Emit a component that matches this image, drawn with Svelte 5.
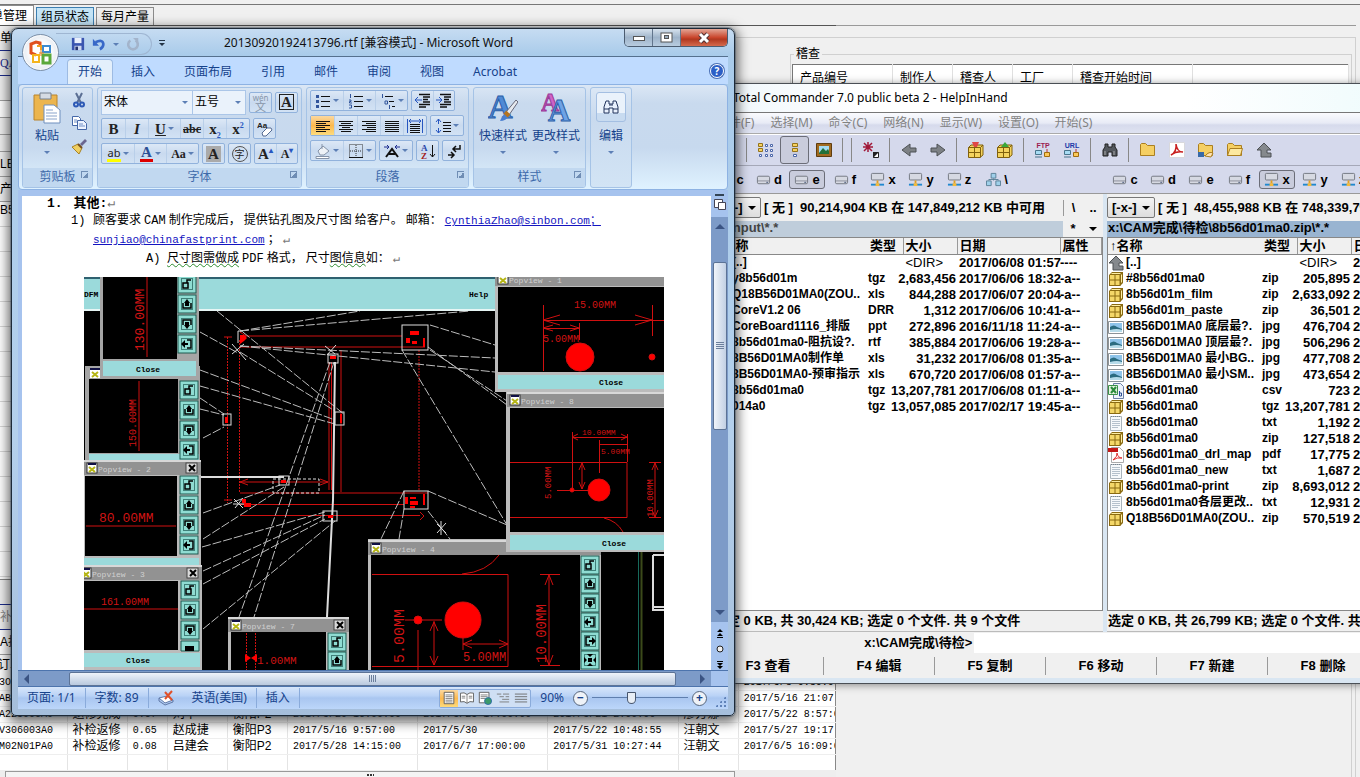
<script>
	// background order application
	const sheetTabs = ['单管理', '组员状态', '每月产量'];
	const auditColumns = ['产品编号', '制作人', '稽查人', '工厂', '稽查开始时间', ''];
	const orderWidths = [69, 60, 40, 60, 60, 130, 130, 130, 60, 97];
	const orders = [
		['3O0', '补检返修', '0.11', '赵成捷', '衡阳P2', '2017/5/3 8:30:00', '2017/5/5', '2017/5/3 9:10:00', '汪朝文', '2017/5/3 0:30:00'],
		['AB1', '补检返修', '0.32', '刘丰', '衡阳P2', '2017/5/16 8:57:00', '2017/5/18', '2017/5/16 9:48:00', '汪朝文', '2017/5/16 21:07:00'],
		['A225006A0', '返修完成', '0.67', '刘丰', '衡阳P2', '2017/5/20 16:00:00', '2017/5/25 17:00:00', '2017/5/21 2:00:00', '廖方娜', '2017/5/22 8:57:00'],
		['V306003A0', '补检返修', '0.65', '赵成捷', '衡阳P3', '2017/5/16 9:57:00', '2017/5/30', '2017/5/22 10:48:55', '汪朝文', '2017/5/27 19:17:00'],
		['M02N01PA0', '补检返修', '0.08', '吕建会', '衡阳P2', '2017/5/28 14:15:00', '2017/6/7 17:00:00', '2017/5/31 10:27:44', '汪朝文', '2017/6/5 16:09:00']
	];

	// Total Commander
	const menus = ['文件(F)', '选择(M)', '命令(C)', '网络(N)', '显示(W)', '设置(O)', '开始(S)'];
	const tools = ['refresh', '|', 'brief', 'full*', 'image', '|', '|', 'invert', '|', 'back', 'forward', '|', 'pack', 'unpack', '|', 'ftp', 'url', '|', 'find', '|', 'folder', 'pdf', 'share', 'open', 'up'];
	const fkeys = ['F3 查看', 'F4 编辑', 'F5 复制', 'F6 移动', 'F7 新建', 'F8 删除', 'Alt+F4 退出'];
	const panels = [
		{
			drive: 'e',
			free: '[ 无 ]  90,214,904 KB 在 147,849,212 KB 中可用',
			path: 'e:\\input\\*.*',
			status: '选定 0 KB, 共 30,424 KB; 选定 0 个文件. 共 9 个文件',
			files: [
				['up', '[..]', '', '<DIR>', '2017/06/08 01:57', '----'],
				['zip', 'y8b56d01m', 'tgz', '2,683,456', '2017/06/06 18:32', '-a--'],
				['csv', 'Q18B56D01MA0(ZOU..', 'xls', '844,288', '2017/06/07 20:04', '-a--'],
				['txt', 'CoreV1.2 06', 'DRR', '1,312', '2017/06/06 10:41', '-a--'],
				['txt', 'CoreBoard1116_排版', 'ppt', '272,896', '2016/11/18 11:24', '-a--'],
				['txt', '8b56d01ma0-阻抗设?.', 'rtf', '385,884', '2017/06/06 19:28', '-a--'],
				['csv', '8B56D01MA0制作单', 'xls', '31,232', '2017/06/08 01:35', '-a--'],
				['csv', '8B56D01MA0-预审指示', 'xls', '670,720', '2017/06/08 01:57', '-a--'],
				['zip', '8b56d01ma0', 'tgz', '13,207,781', '2017/06/08 01:11', '-a--'],
				['zip', '014a0', 'tgz', '13,057,085', '2017/02/17 19:45', '-a--']
			]
		},
		{
			drive: 'x',
			free: '[ 无 ]  48,455,988 KB 在 748,339,792 KB 中可用',
			path: 'x:\\CAM完成\\待检\\8b56d01ma0.zip\\*.*',
			status: '选定 0 KB, 共 26,799 KB; 选定 0 个文件. 共 16 个文件',
			files: [
				['up', '[..]', '', '<DIR>'],
				['zip', '#8b56d01ma0', 'zip', '205,895'],
				['zip', '8b56d01m_film', 'zip', '2,633,092'],
				['zip', '8b56d01m_paste', 'zip', '36,501'],
				['jpg', '8B56D01MA0 底层最?.', 'jpg', '476,704'],
				['jpg', '8B56D01MA0 顶层最?.', 'jpg', '506,296'],
				['jpg', '8B56D01MA0 最小BG..', 'jpg', '477,708'],
				['jpg', '8B56D01MA0 最小SM..', 'jpg', '473,654'],
				['csv', '8b56d01ma0', 'csv', '723'],
				['zip', '8b56d01ma0', 'tgz', '13,207,781'],
				['txt', '8b56d01ma0', 'txt', '1,192'],
				['zip', '8b56d01ma0', 'zip', '127,518'],
				['pdf', '8b56d01ma0_drl_map', 'pdf', '17,775'],
				['txt', '8b56d01ma0_new', 'txt', '1,687'],
				['zip', '8b56d01ma0-print', 'zip', '8,693,012'],
				['txt', '8b56d01ma0各层更改..', 'txt', '12,931'],
				['zip', 'Q18B56D01MA0(ZOU..', 'zip', '570,519']
			].map((f) => [...f, '2017/06/08 01:57', '-a--'])
		}
	];
	const drives = ['c', 'd', 'e', 'f', 'x', 'y', 'z', '\\'];

	// Word
	const ribbonTabs = ['开始', '插入', '页面布局', '引用', '邮件', '审阅', '视图', 'Acrobat'];

	// [x1, y1, x2, y2] of the nets in the drawing
	const nets = [
		[217, 311, 345, 415], [200, 332, 238, 353], [200, 370, 335, 420], [200, 386, 335, 424],
		[200, 398, 224, 414], [200, 409, 224, 415], [203, 438, 224, 427], [240, 331, 360, 311],
		[240, 331, 470, 311], [240, 346, 495, 358], [240, 346, 495, 372], [240, 352, 335, 411],
		[430, 325, 495, 345], [428, 347, 507, 405], [430, 350, 507, 401], [402, 350, 507, 525],
		[428, 491, 507, 525], [428, 511, 450, 539], [404, 491, 381, 539], [404, 509, 399, 539],
		[203, 513, 280, 485], [203, 539, 284, 487], [202, 547, 325, 512], [203, 571, 325, 515],
		[203, 584, 325, 519], [203, 629, 335, 521], [330, 362, 239, 617], [334, 362, 254, 617]
	];
	const padBoxes = [
		[402, 325, 26, 25], [328, 354, 10, 9], [223, 414, 8, 11], [335, 412, 9, 13],
		[279, 476, 10, 9], [323, 511, 14, 10], [404, 491, 24, 18]
	];
</script>

{#snippet caret()}<i class="caret"></i>{/snippet}

{#snippet icon(name)}
	<svg class="ico" width="16" height="16" viewBox="0 0 16 16" fill="none" aria-hidden="true">
		{#if name === 'zip'}
			<path d="M1 4 4 1h11v11l-3 3H1z" fill="#8a6a10" /><path d="M2 4h10v10H2z" fill="#f4d768" /><path d="M4 2h9l-1 1H3zM13 4l1-1v8l-1 1z" fill="#fdeea5" /><path d="M7 3v12M1 9h12M12 4v11" stroke="#8a6a10" />
		{:else if name === 'jpg'}
			<path d="M.5 2.500h15v12H.5z" fill="#fff" stroke="#8c9499" /><path d="M2 4h12v9H2z" fill="#8ec4ea" /><path d="M2 8q4-3 7 0l5 2v3H2z" fill="#2b6c80" /><path d="M2 11q7-2 12 0v2H2z" fill="#b7dcea" />
		{:else if name === 'txt'}
			<path d="M2.500 1.500h11v14h-11z" fill="#f6f9fb" stroke="#aab4bc" /><path d="M4 4.500h8M4 6.500h8M4 8.500h8M4 10.500h8M4 12.500h6" stroke="#b5c1cc" /><path d="M3 1.500h10" stroke="#77838d" stroke-dasharray="1 1" />
		{:else if name === 'csv'}
			<path d="M5.500.5h7l3 3v12h-10z" fill="#eef3fb" stroke="#6b7fa5" /><path d="M.5 2.500h9v9h-9z" fill="#e4f2de" stroke="#3a9148" /><path d="m3 4 5 6M8 4 3 10" stroke="#2b8a3b" stroke-width="2" /><path d="M11.500 8v5m0-3h2v3h-2" stroke="#2c4f94" />
		{:else if name === 'pdf'}
			<path d="M3.500.5h8l4 4v11h-12z" fill="#fff" stroke="#aaa" /><path d="M0 1h10v4H0z" fill="#c31818" /><path d="M5 13q5-4 4-7 1 5 5 5-5-1-9 2z" stroke="#e03030" />
		{:else if name === 'acrobat'}
			<path d="M.5.5h15v15H.5z" fill="#fff" stroke="#d8d8dc" /><path d="M2 13q6-3 5-11 1 8 7 8-7-1-12 3z" stroke="#c81e1e" stroke-width="1.500" />
		{:else if name === 'up'}
			<path d="M8 1 15 8h-4v3h4v4H5V8H1z" fill="#85898d" stroke="#4d5154" />
		{:else if name === 'drive'}
			<rect x="1.500" y="4.500" width="13" height="8" rx="1.500" fill="#d6d9e2" stroke="#71757f" /><path d="M2 9.500h12" stroke="#8b8f9b" /><path d="M11 11h2" stroke="#457" />
		{:else if name === 'net'}
			<rect x="1.500" y="1.500" width="13" height="7" rx="1" fill="#d6d9e2" stroke="#71757f" /><path d="M8 9v3" stroke="#e4a020" stroke-width="2" /><path d="M1 13.500h14" stroke="#2088cf" stroke-width="2" /><path d="M6 12h4v3H6z" fill="#f4b93a" />
		{:else if name === 'hood'}
			<path d="M5.500 1.500h5v5h-5zM.5 9.500h5v5h-5zM10.500 9.500h5v5h-5z" fill="#9fd0ea" stroke="#5a8096" /><path d="M8 7v2M3 9V8h10v1" stroke="#5a8096" />
		{:else if name === 'brief'}
			<path d="M.5 1.500h4v3h-4zM.5 6.500h4v3h-4z" fill="#f7d15f" stroke="#94731a" />
			<path d="M1.500 12.500h2v2h-2zM7.500 2.500h2v2h-2zM12.500 2.500h2v2h-2zM7.500 7.500h2v2h-2zM12.500 7.500h2v2h-2zM7.500 12.500h2v2h-2zM12.500 12.500h2v2h-2z" fill="#fff" stroke="#4b66a8" />
		{:else if name === 'full'}
			<path d="M5.500 1.500h5v3h-5zM5.500 6.500h5v3h-5z" fill="#f7d15f" stroke="#94731a" /><path d="M6.500 12.500h3v2h-3z" fill="#fff" stroke="#4b66a8" />
		{:else if name === 'image'}
			<path d="M.5 1.500h15v13H.5z" fill="#a06a20" stroke="#5e3d10" /><path d="M3 4h10v8H3z" fill="#a4dcf2" /><path d="m3 11 4-5 3 3 2-2 1 2v3H3z" fill="#23713a" />
		{:else if name === 'invert'}
			<path d="M5 0v10M0 5h10M1 1l8 8M9 1 1 9" stroke="#a01838" stroke-width="1.500" /><path d="M10.500 10.500h5v5h-5z" fill="#fff" stroke="#222" /><path d="m10 10v6l6-6z" fill="#222" />
		{:else if name === 'back'}
			<path d="M9 2v4h6v4H9v4L1 8z" fill="#7d8185" stroke="#4d5154" />
		{:else if name === 'forward'}
			<path d="M7 2v4H1v4h6v4l8-6z" fill="#7d8185" stroke="#4d5154" />
		{:else if name === 'pack' || name === 'unpack'}
			<path d="M.5 5.500 3 3h12v10l-3 2.500H.5z" fill="#f4d35e" stroke="#80600c" /><path d="M.5 10.500h12M6.500 5v10M.5 5.500h12v10M12.500 5.500 15 3" stroke="#80600c" />
			{#if name === 'pack'}<path d="M4 0h7L9 5H6z" fill="#e04646" />{:else}<path d="m8 0 4 5H4z" fill="#3aa83a" />{/if}
		{:else if name === 'ftp' || name === 'url'}
			<text x="8" y="6" text-anchor="middle" font-size="7" font-weight="bold" font-family="Liberation Sans" fill={name === 'ftp' ? '#9c2050' : '#2038a8'}>{name.toUpperCase()}</text><path d="M.5 8.500h6v4h-6zM0 15h7" fill="#a8dcf4" stroke="#49758c" /><path d="M9.500 10.500h5v4h-5z" fill="#fbc95a" stroke="#a06c10" /><path d="M12 7v3" stroke="#b33" />
		{:else if name === 'find'}
			<path d="M3 2h3v3h4V2h3v3l2 3v6h-5v-4H6v4H1V8l2-3z" fill="#53575d" stroke="#222" /><path d="M3 9v4M12 9v4" stroke="#aaa" />
		{:else if name === 'folder' || name === 'share' || name === 'open'}
			<path d="M.5 13.500v-11l1-1h4l2 2h7v10z" fill="#f5cf63" stroke="#ab7f20" />
			{#if name === 'open'}<path d="m3 6.500h12.500l-2 7H.5z" fill="#fde9a0" stroke="#ab7f20" />{/if}
			{#if name === 'share'}<path d="M0 10h6v5H0z" fill="#386aa8" /><path d="M7 14q4-5 8-3l-2 4z" fill="#ffe3b4" stroke="#ab7f20" />{/if}
		{:else if name === 'refresh'}
			<path d="M13 8a5 5 0 1 1-2-4l2 2" stroke="#2a8a3a" stroke-width="2" />
		{:else if name === 'save'}
			<path d="M1 1h14v14H1z" fill="#3a55b0" /><path d="M4 1h8v6H4z" fill="#e9effc" /><path d="M4 10h8v5H4z" fill="#cdd6ee" /><path d="M5 11h3v4H5z" fill="#26336e" />
		{:else if name === 'undo'}
			<path d="M4 6q8-4 9 2 0 4-4 6" stroke="#3868c8" stroke-width="3" /><path d="M1 2v8h7z" fill="#3868c8" />
		{:else if name === 'redo'}
			<path d="M5 4a5.500 5.500 0 1 0 6 0" stroke="#a3b4cb" stroke-width="3" /><path d="M8 1h6v6z" fill="#a3b4cb" />
		{:else if name === 'cut'}
			<path d="M5 1 10 11M11 1 6 11" stroke="#5b6f94" stroke-width="2" /><circle cx="5" cy="12.500" r="2" stroke="#2d59b5" stroke-width="2" /><circle cx="11" cy="12.500" r="2" stroke="#2d59b5" stroke-width="2" />
		{:else if name === 'copy'}
			<path d="M1.500 1.500h6l2 2v7h-8z" fill="#fff" stroke="#4568a8" /><path d="M6.500 5.500h6l3 3v6h-9z" fill="#eef4ff" stroke="#4568a8" /><path d="M8 9h4M8 11h6M3 5h3M3 7h3" stroke="#6f8ec6" />
		{:else if name === 'brush'}
			<path d="m9 6 5-5 2 2-5 5z" fill="#6a6690" /><path d="m1 9 6-3 4 4-3 6z" fill="#f0cf60" stroke="#a88224" /><path d="m7 6 4 4" stroke="#754c1c" stroke-width="2" />
		{:else if name === 'eraser'}
			<text x="0" y="7" font-size="8" font-weight="bold" font-family="Liberation Sans" fill="#222">Aa</text><path d="m5 12 5-5h4l1 2-6 6H6z" fill="#fff" stroke="#546b92" />
		{:else if name === 'bullets' || name === 'numbers'}
			<path d="M6 3.500h9M6 8.500h9M6 13.500h9" stroke="#111" />
			{#if name === 'bullets'}<path d="M1 2h3v3H1zM1 7h3v3H1zM1 12h3v3H1z" fill="#31549b" />{:else}<path d="M2.500 1v4M1 7h2v1.500H1.500V10H4M1 12h2.500v3H1" stroke="#31549b" />{/if}
		{:else if name === 'multi'}
			<path d="M5 3.500h8M9 8.500h5M12 13.500h3" stroke="#111" /><path d="M2.500 1v4M5 8h2.500v3H5zM9.500 12v4" stroke="#31549b" />
		{:else if name === 'outdent' || name === 'indent'}
			<path d="M4 1.500h11M8 4h7M8 6.500h5M8 9h7M4 11.500h11M4 14h7" stroke="#111" stroke-width="1.500" />
			{#if name === 'outdent'}<path d="M0 7h7M3 4 0 7l3 3" stroke="#2756c0" />{:else}<path d="M0 7h6M3 4l3 3-3 3" stroke="#2756c0" />{/if}
		{:else if name === 'left'}
			<path d="M1 3.500h14M1 5.500h10M1 7.500h14M1 9.500h9M1 11.500h14M1 13.500h10" stroke="#111" />
		{:else if name === 'center'}
			<path d="M1 3.500h14M3 5.500h10M1 7.500h14M4 9.500h8M1 11.500h14M3 13.500h10" stroke="#111" />
		{:else if name === 'right'}
			<path d="M1 3.500h14M5 5.500h10M1 7.500h14M6 9.500h9M1 11.500h14M5 13.500h10" stroke="#111" />
		{:else if name === 'justify'}
			<path d="M1 3.500h14M1 5.500h14M1 7.500h14M1 9.500h14M1 11.500h14M1 13.500h14" stroke="#111" />
		{:else if name === 'spread'}
			<path d="M.5 1v14M15.500 1v14M2 3h12M4 1 2 3l2 2M12 1l2 2-2 2" stroke="#2756c0" /><path d="M3 6.500h10M3 8.500h10M3 10.500h10M3 12.500h10M3 14.500h10" stroke="#111" />
		{:else if name === 'spacing'}
			<path d="M3.500 1v5M3.500 10v5M1 4l2.500-3L6 4M1 12l2.500 3L6 12" stroke="#2756c0" /><path d="M8 4.500h8M8 7.500h8M8 10.500h8M8 13.500h8" stroke="#111" />
		{:else if name === 'fill'}
			<path d="m3 8 5-5 6 5-5 4H5z" fill="#eef2f7" stroke="#8593a8" /><path d="M7 6V1" stroke="#8593a8" /><path d="M1 13.500h13v2H1z" fill="#fff" stroke="#8593a8" />
		{:else if name === 'grid'}
			<path d="M1.500 1.500h13v13h-13zM8 2v12M2 8h12" stroke="#333" stroke-dasharray="1 1" /><path d="M1 14.500h14" stroke="#111" />
		{:else if name === 'cjk'}
			<path d="m2 14 6-8 6 8M5 11h6" stroke="#111" stroke-width="2" /><path d="M0 4h5M3 2l2 2-2 2M16 4h-5M13 2l-2 2 2 2" stroke="#1c2c90" />
		{:else if name === 'sort'}
			<text x="1" y="8" font-size="9" font-weight="bold" font-family="Liberation Serif" fill="#2846a8">A</text><text x="1" y="16" font-size="9" font-weight="bold" font-family="Liberation Serif" fill="#a32121">Z</text><path d="M12.500 2v12M10 11l2.500 3 2.500-3" stroke="#111" />
		{:else if name === 'marks'}
			<path d="M14 2v4H8M10 3 7 6l3 3M2 12h6M5 9l3 3-3 3" stroke="#111" stroke-width="1.500" />
		{:else if name === 'binocular'}
			<path d="M3 2h3v3h4V2h3l2 6v6h-5V9H6v5H1V8z" fill="#e9f1fd" stroke="#22345c" /><path d="M1 10h5M10 10h5M6 6h4" stroke="#22345c" />
		{:else if name === 'spell'}
			<path d="m1 8 6 5 8-3-6-4z" fill="#fff" stroke="#6079a8" /><path d="m1 8v3l6 4 8-3v-2" stroke="#6079a8" /><path d="m7 2 7 8M14 1 7 9" stroke="#e0502a" stroke-width="2" />
		{:else if name === 'print'}
			<path d="M2.500 1.500h11v13h-11z" fill="#fff" stroke="#555" /><path d="M4 4.500h8M4 6.500h8M4 8.500h8M4 10.500h8M4 12.500h8" stroke="#777" />
		{:else if name === 'reading'}
			<path d="M.5 2.500Q5 1 8 4q3-3 7.500-1.500v10Q11 11 8 14q-3-3-7.500-1.500z" fill="#fff" stroke="#555" /><path d="M8 4v10M2 6h4M2 8h4M10 6h4M10 8h4" stroke="#777" />
		{:else if name === 'web'}
			<path d="M1.500 1.500h11v12h-11z" fill="#fff" stroke="#555" /><path d="M3 4.500h8M3 6.500h8M3 8.500h5" stroke="#777" /><circle cx="11.500" cy="11.500" r="4" fill="#3d9a6b" stroke="#2869a8" />
		{:else if name === 'outline'}
			<path d="M1 3.500h5M8 3.500h7M4 6.500h5M11 6.500h4M7 9.500h8M4 12.500h11" stroke="#777" />
		{:else if name === 'draft'}
			<path d="M1 3.500h14M1 6.500h14M1 9.500h14M1 12.500h14" stroke="#666" />
		{/if}
	</svg>
{/snippet}

<div class="desktop">
	<main class="orders">
		<section class="sheet">
			<nav class="sheet-tabs">
				{#each sheetTabs as tab, i}
					<button class:current={i === 0} class:hot={i === 1}>{tab}</button>
				{/each}
			</nav>
			<div class="form">
				<div class="line tall blue">单</div>
				<div class="line tall blue link">QA</div>
				<div class="line tall"></div>
				<div class="line white"></div>
				<div class="line"></div>
				<div class="line"></div>
				<div class="line tall">LE</div>
				<div class="line tall">产品</div>
				<div class="rows">B5</div>
				<div class="line tall blue"></div>
				<div class="line tall blue dim">补</div>
				<div class="line tall white">A抽</div>
			</div>
			<table class="order-table">
				<colgroup>{#each orderWidths as w}<col style="width: {w}px" />{/each}</colgroup>
				<thead><tr><th colspan="10">订单</th></tr></thead>
				<tbody>
					{#each orders as row}
						<tr>{#each row as cell, i}<td class:num={![1, 3, 4, 8].includes(i)}>{cell}</td>{/each}</tr>
					{/each}
					<tr>{#each orderWidths as w}<td></td>{/each}</tr>
				</tbody>
			</table>
			<div class="order-scroll"><div><i></i></div></div>
		</section>
		<section class="audit">
			<div class="rule"></div>
			<div class="audit-page">
				<fieldset>
					<legend>稽查</legend>
					<table>
						<thead><tr>{#each auditColumns as c}<th>{c}</th>{/each}</tr></thead>
					</table>
				</fieldset>
			</div>
		</section>
	</main>

	<section class="tc">
		<header class="tc-title">{@render icon('save')}<span>Total Commander 7.0 public beta 2 - HelpInHand</span></header>
		<nav class="tc-menu">{#each menus as m}<button>{m}</button>{/each}</nav>
		<div class="tc-tools">
			{#each tools as t}
				{#if t === '|'}
					<i class="sep"></i>
				{:else}
					<button class:down={t.endsWith('*')} aria-label={t.replace('*', '')}>{@render icon(t === 'pdf' ? 'acrobat' : t.replace('*', ''))}</button>
				{/if}
			{/each}
		</div>
		<div class="tc-halves tc-drives">
			{#each panels as p}
				<div>
					{#each drives as d, i}
						<button class:down={d === p.drive}>{@render icon(i < 4 ? 'drive' : i < 7 ? 'net' : 'hood')}{d}</button>
					{/each}
				</div>
			{/each}
		</div>
		<div class="tc-halves">
			{#each panels as p, n}
				<section class="panel">
					<div class="info">
						<span class="drive-pick"><select aria-label="drive"><option>[-{p.drive}-]</option></select>{@render caret()}</span>
						<span class="free">{p.free}</span>
						<button class="root">\</button><button>..</button>
					</div>
					<div class="path">
						<span class:active={n === 1}>{p.path}</span>
						<button>*</button><button aria-label="history">{@render caret()}</button>
					</div>
					<div class="list">
						<table>
							<thead><tr><th class="name">↑名称</th><th class="ext">类型</th><th class="size">大小</th><th class="date">日期</th><th>属性</th></tr></thead>
							<tbody>
								{#each p.files as [kind, name, ext, size, date, attr]}
									<tr>
										<td class="narrow"><span class="file">{@render icon(kind)}{name}</span></td>
										<td class="narrow">{ext}</td>
										<td><span class="amount" class:dir={!ext}>{size}</span></td>
										<td class="date">{date}</td>
										<td class="attr">{attr}</td>
									</tr>
								{/each}
							</tbody>
						</table>
					</div>
					<div class="panel-status">{p.status}</div>
				</section>
			{/each}
		</div>
		<div class="cmd"><label for="cmd">x:\CAM完成\待检&gt;</label><input id="cmd" /></div>
		<div class="fkeys">{#each fkeys as k}<button>{k}</button>{/each}</div>
	</section>

	<section class="word">
		<header class="title">
			<div class="quick">
				<button aria-label="保存">{@render icon('save')}</button>
				<button aria-label="撤消">{@render icon('undo')}</button>
				{@render caret()}
				<button aria-label="重复">{@render icon('redo')}</button>
			</div>
			<span class="more">{@render caret()}</span>
			<h1>20130920192413796.rtf [兼容模式] - Microsoft Word</h1>
			<div class="caption">
				<button aria-label="最小化"><svg width="14" height="8"><rect x="1.500" y="2.500" width="11" height="4" fill="#fff" stroke="#555" /></svg></button>
				<button aria-label="还原"><svg width="13" height="11"><rect x="1" y="1" width="11" height="9" fill="#fff" stroke="#555" /><rect x="4.500" y="3.500" width="4" height="3" fill="#9ab" stroke="#555" /></svg></button>
				<button class="close" aria-label="关闭"><svg width="14" height="12"><path d="M3 2l8 8M11 2l-8 8" stroke="#533" stroke-width="5" /><path d="M3 2l8 8M11 2l-8 8" stroke="#fff" stroke-width="3" /></svg></button>
			</div>
		</header>
		<button class="office" aria-label="Office">
			<svg width="26" height="26" viewBox="0 0 26 26" fill="none" stroke-width="3">
				<path d="M12 6V3L8 2 3 4v9l5 2" stroke="#e0501e" /><path d="M9 6h4v4" stroke="#f3a022" stroke-width="2" />
				<path d="M15 6h7v6h-7z" stroke="#3c8bd0" stroke-width="2" />
				<path d="M5 15h6v7H5z" stroke="#f4b41c" stroke-width="2" /><path d="M15 15h7v8h-7z" stroke="#5aa83a" /><path d="M11 13h5M13 10v6" stroke="#e58020" stroke-width="1" />
			</svg>
		</button>
		<nav class="tabs">
			{#each ribbonTabs as tab, i}<button class:current={i === 0}>{tab}</button>{/each}
			<button class="help" aria-label="帮助">?</button>
		</nav>
		<div class="ribbon">
			<section class="group">
				<div class="body clip">
					<button class="big">
						<svg width="28" height="32" viewBox="0 0 28 32"><path d="M1 3h23v25H1z" fill="#ecb54e" stroke="#b9842c" /><path d="M7 1h11v6H7z" fill="#d5dbe3" stroke="#75808f" /><path d="M11 13h10l6 5v13H11z" fill="#fff" stroke="#6f8fbe" /><path d="M13 18h7M13 21h11M13 24h11M13 27h11" stroke="#8aa4cb" /></svg>
						粘贴{@render caret()}
					</button>
					<div class="stack">
						<button aria-label="剪切">{@render icon('cut')}</button>
						<button aria-label="复制">{@render icon('copy')}</button>
						<button aria-label="格式刷">{@render icon('brush')}</button>
					</div>
				</div>
				<footer>剪贴板<i class="launch"></i></footer>
			</section>
			<section class="group">
				<div class="body">
					<div class="row first">
						<span class="combo wide"><select aria-label="字体"><option>宋体</option></select>{@render caret()}</span>
						<span class="combo"><select aria-label="字号"><option>五号</option></select>{@render caret()}</span>
						<span class="set"><button class="wen"><small>wén</small>文</button></span>
						<span class="set"><button class="serif"><b class="boxed">A</b></button></span>
					</div>
					<div class="row">
						<span class="set roomy">
							<button class="serif"><b>B</b></button><button class="serif"><b><em>I</em></b></button>
							<button class="serif drop"><b><u>U</u></b>{@render caret()}</button>
							<button class="serif"><s>abc</s></button><button class="serif"><b>x<sub>2</sub></b></button><button class="serif"><b>x<sup>2</sup></b></button>
						</span>
						<span class="set"><button aria-label="清除格式">{@render icon('eraser')}</button></span>
					</div>
					<div class="row">
						<span class="set">
							<button class="drop"><span class="mark hl">ab</span>{@render caret()}</button>
							<button class="drop serif"><b class="mark red">A</b>{@render caret()}</button>
							<button class="drop serif"><b class="less">Aa</b>{@render caret()}</button>
						</span>
						<span class="set"><button class="serif"><b class="shade">A</b></button></span>
						<span class="set"><button><span class="ring">字</span></button></span>
						<span class="set"><button class="serif"><b>A<sup>▴</sup></b></button><button class="serif"><b class="less">A<sup>▾</sup></b></button></span>
					</div>
				</div>
				<footer>字体<i class="launch"></i></footer>
			</section>
			<section class="group">
				<div class="body">
					<div class="row">
						<span class="set">
							{#each ['bullets', 'numbers', 'multi'] as n}<button class="drop" aria-label={n}>{@render icon(n)}{@render caret()}</button>{/each}
						</span>
						<span class="set">{#each ['outdent', 'indent'] as n}<button aria-label={n}>{@render icon(n)}</button>{/each}</span>
					</div>
					<div class="row">
						<span class="set roomy">
							{#each ['left', 'center', 'right', 'justify', 'spread'] as n}<button class:on={n === 'left'} aria-label={n}>{@render icon(n)}</button>{/each}
						</span>
						<span class="set"><button class="drop" aria-label="行距">{@render icon('spacing')}{@render caret()}</button></span>
					</div>
					<div class="row">
						<span class="set">{#each ['fill', 'grid'] as n}<button class="drop" aria-label={n}>{@render icon(n)}{@render caret()}</button>{/each}</span>
						<span class="set"><button class="drop" aria-label="中文版式">{@render icon('cjk')}{@render caret()}</button></span>
						<span class="set"><button aria-label="排序">{@render icon('sort')}</button></span>
						<span class="set"><button aria-label="编辑标记">{@render icon('marks')}</button></span>
					</div>
				</div>
				<footer>段落<i class="launch"></i></footer>
			</section>
			<section class="group">
				<div class="body styles">
					<button class="big">
						<svg width="30" height="32" viewBox="0 0 30 32"><text x="0" y="26" font-family="Liberation Serif" font-size="34" font-weight="bold" fill="#4f8ad6" stroke="#2b5ea8">A</text><path d="m18 20 10-12 2 2-9 13z" fill="#e6e9ee" stroke="#667" /><path d="M12 29q3-7 6-8l3 3q-3 5-9 5z" fill="#4a7fd0" /><path d="m17 20 4 4" stroke="#b57420" stroke-width="4" /></svg>
						快速样式{@render caret()}
					</button>
					<button class="big">
						<svg width="30" height="32" viewBox="0 0 30 32"><text x="0" y="19" font-family="Liberation Serif" font-size="25" font-weight="bold" fill="#cf63c8" stroke="#9c3a97">A</text><text x="7" y="29" font-family="Liberation Serif" font-size="31" font-weight="bold" fill="#6ea3e6" stroke="#2b5ea8">A</text></svg>
						更改样式{@render caret()}
					</button>
				</div>
				<footer>样式<i class="launch"></i></footer>
			</section>
			<section class="group edit">
				<div class="body">
					<button class="big"><span class="tile">{@render icon('binocular')}</span>编辑{@render caret()}</button>
				</div>
			</section>
		</div>

		<div class="work">
			<article class="page">
				<p class="h"><b>1.</b><b>其他:</b><i>↵</i></p>
				<p class="l1"><span>1)</span><span>顾客要求</span><tt>CAM</tt><span>制作完成后，</span><span>提供钻孔图及尺寸图</span><span>给客户。</span><span>邮箱：</span><a href="mailto:CynthiaZhao@sinbon.com">CynthiaZhao@sinbon.com；</a></p>
				<p class="l2"><a href="mailto:sunjiao@chinafastprint.com">sunjiao@chinafastprint.com</a>；<i>↵</i></p>
				<p class="l3"><span>A)</span><span class="wavy">尺寸图需做成</span><tt>PDF</tt><span>格式，</span><span>尺寸<span class="wavy">图信息</span>如：</span><i>↵</i></p>
				<svg class="cad" width="580" height="393" viewBox="84 277 580 393">
					{#snippet tool(x, y, k)}
						<g transform="translate({x} {y})">
							<rect width="18" height="18" fill="#8fdcd2" stroke="#1c5a50" /><path d="M3 3.500h12M3 14.500h12M3.500 4v10M14.500 4v10" stroke="#3f7f78" />
							{#if k % 6 === 0}<path d="M5 8h5v5H5zM9 8V5h4" fill="none" stroke="#000" stroke-width="1.500" />
							{:else if k % 6 === 1}<path d="M5 8v5h8V8" fill="none" stroke="#000" stroke-width="1.500" /><path d="m9 4 3 4h-1v3H7V8H6z" />
							{:else if k % 6 === 2}<path d="M5 10V5h8v5" fill="none" stroke="#000" stroke-width="1.500" /><path d="m9 14 3-4h-1V7H7v3H6z" />
							{:else if k % 6 === 3}<path d="M9 5h4v8H9" fill="none" stroke="#000" stroke-width="1.500" /><path d="m3 9 4-4v3h3v2H7v3z" />
							{:else if k % 6 === 4}<path d="M9 5H5v8h4" fill="none" stroke="#000" stroke-width="1.500" /><path d="m15 9-4-4v3H8v2h3v3z" />
							{:else}<path d="M7 7h4v4H7zM3 6l3 3-3 3zM15 6l-3 3 3 3zM6 3h6L9 6zM6 15h6l-3-3z" />{/if}
						</g>
					{/snippet}
					{#snippet bar(x, y, w, label, closer)}
						<rect {x} {y} width={w} height="15" fill="#929292" />
						<path d="M{x} {y + 1}h{w}" stroke="#d8d8d8" stroke-width="2" />
						<rect x={x + 3} y={y + 3} width="10" height="10" fill="#fff" stroke="#333" /><path d="M{x + 4} {y + 4}h8" stroke="#114" stroke-width="2" /><path d="m{x + 5} {y + 7} 6 5m0-5-6 5" stroke="#b5b515" stroke-width="2" />
						<text class="pop" x={x + 14} y={y + 12}>{label}</text>
						{#if closer}<rect x={x + w - 15} y={y + 3} width="11" height="10" fill="#d9d9d9" stroke="#444" /><path d="m{x + w - 12} {y + 5} 6 6m0-6-6 6" stroke="#000" stroke-width="2" />{/if}
					{/snippet}
					<rect x="84" y="277" width="580" height="393" />
					<g class="red">
						<path d="M240 336H402M240 347H425M240 493H428M240 504.500H404M240 515.500H420M240 482H328M329 362V490M331.500 362V490M341 350V492" />
						<path d="M227.500 337V503M239.500 340V492M419 350V490" stroke-dasharray="2 1" />
						<path d="M240 340l6-4-6-4M420 512l4 4-4 4M248 479l-8 3 8 3M320 479l8 3-8 3M224 337h8M224 500h8" />
					</g>
					<g class="net">{#each nets as [x1, y1, x2, y2]}<path d="M{x1} {y1}L{x2} {y2}" />{/each}</g>
					<path d="M335 362 333 500 327 617M201 477H284M653 555h11M653 555v55h11M653 607h11" fill="none" stroke="#ddd" stroke-width="2" />
					{#each padBoxes as [x, y, width, height]}<rect {x} {y} {width} {height} fill="none" stroke="#ddd" />{/each}
					<rect x="273" y="479" width="46" height="14" fill="none" stroke="#ddd" stroke-dasharray="3 2" />
					<path d="M238 331h5M238 331v12M232 344l14 16M244 344l-12 10M325 346l10 8M336 345l-9 10M437 524l9 9M446 523l-9 10M441 521v14M234 499l9 9M243 498l-8 10M233 504h12" stroke="#ddd" />
					<g fill="#f00">
						<path d="M240 335h4l3 3-3 3-4 3zM410 331h9v4h-9zM406 338h4v5h-4zM412 341h5v3h-5zM423 338h2v9h-2zM330 356h6v3h-6zM225 417h3v6h-3zM340 414h2v9h-2zM281 480h5v3h-5zM328 515h5v3h-5zM405 497h3v7h-3zM410 497h6v2h-6zM410 501h8v4h-8zM410 506h5v2h-5zM423 494h2v11h-2zM244 503h7v4h-7zM242 499h4v4h-4z" />
					</g>
					<path d="M638.500 545V670" stroke="#17695b" /><path d="M641.500 545V670" stroke="#3b4a1a" stroke-width="2" />

					<!-- menu strip of the editor -->
					<path d="M84 277h411v34H84z" fill="#e6f5f4" /><path d="M84 279h411v30H84z" fill="#9bdadb" /><path d="M84 278h411" stroke="#2f6170" stroke-width="2" />
					<text class="ui" x="84" y="297">DFM</text><text class="ui" x="469" y="297">Help</text>

					<!-- dimension popups -->
					<path d="M85 366h115v95H85z" fill="#a5a5a5" /><path d="M89 379h89v74H89z" /><rect x="90" y="368" width="10" height="10" fill="#fff" /><path d="M90 369h10" stroke="#114" stroke-width="2" /><path d="m92 372 6 5m0-5-6 5" stroke="#b5b515" stroke-width="2" />
					<path d="M89 454h110v8H89z" fill="#9bdadb" />
					{#each [0, 1, 2, 3] as k}{@render tool(180, 381 + k * 20, k)}{/each}
					<path class="red" d="M139 381V451" /><text class="dim" font-size="10" transform="translate(136 447) rotate(-90)">150.00MM</text>

					<path d="M100 277h99v101h-99z" fill="#a5a5a5" /><path d="M103 277h74v82h-74z" />
					{#each [0, 1, 2, 3] as k}{@render tool(178, 275 + k * 20, k)}{/each}
					<path d="M103 361h93v15h-93z" fill="#9bdadb" /><text class="ui" x="136" y="372">Close</text>
					<path class="red" d="M147 277V357" /><text class="dim" font-size="13" transform="translate(144 351) rotate(-90)">130.00MM</text>

					<path d="M84 460h117v105H84z" fill="#bbb" /><path d="M85 476h92v80H85z" /><path d="M84 558h115v8H84z" fill="#9bdadb" />
					{@render bar(84, 460, 117, 'Popview - 2', true)}
					{#each [0, 1, 2, 3] as k}{@render tool(180, 476 + k * 20, k)}{/each}
					<path class="red" d="M86 526h90" /><text class="dim" font-size="13" x="99" y="522">80.00MM</text>

					<path d="M84 565h118v105H84z" fill="#bbb" /><path d="M84 581h94v69H84z" /><path d="M84 653h116v14H84z" fill="#9bdadb" />
					{@render bar(78, 565, 124, 'Popview - 3', true)}
					{#each [0, 1, 2] as k}{@render tool(181, 581 + k * 20, k)}{/each}
					<path d="M181 641h18v10h-18z" fill="#8fdcd2" stroke="#1c5a50" /><path d="M185 651v-5h9v5z" />
					<path class="red" d="M84 609h94" /><text class="dim" font-size="10" x="101" y="605">161.00MM</text><text class="ui" x="126" y="663">Close</text>

					<path d="M228 617h121v53H228z" fill="#bbb" /><path d="M231 632h95v38h-95z" />
					{@render bar(228, 617, 121, 'Popview - 7', true)}
					{#each [0, 1] as k}{@render tool(328, 633 + k * 19, k)}{/each}
					<path class="red" d="M246.500 633V670M255.500 633V670" stroke-dasharray="2 1" /><path d="M245 654l6 4 6-4v8l-6-4-6 4z" fill="#f00" /><text class="dim" font-size="11" x="257" y="664">1.00MM</text>

					<path d="M368 539h233v131H368z" fill="#bbb" /><path d="M371 555h209v115H371z" />
					{@render bar(368, 540, 233, 'Popview - 4', false)}
					{#each [0, 1, 2, 3, 4, 5] as k}{@render tool(581, 556 + k * 19, k)}{/each}
					<g class="red">
						<path d="M462 574q25-2 37-19M372 574.500h136v92H372M405 620h37M434 621v44M418 630v40M463 638v12M463 644h45M549 575v90M540 574.500h20M540 665.500h20" />
						<path d="m430 631 4-9 4 9M430 656l4 9 4-9M472 640l-9 4 9 4M499 640l9 4-9 4M545 585l4-10 4 10M545 655l4 10 4-10" />
						<circle cx="463" cy="620" r="18" fill="#f00" /><circle cx="418" cy="620" r="4" fill="#f00" />
					</g>
					<text class="dim" font-size="12" x="463" y="661">5.00MM</text>
					<text class="dim" font-size="15" transform="translate(404 663) rotate(-90)">5.00MM</text>
					<text class="dim" font-size="14" transform="translate(546 663) rotate(-90)">10.00MM</text>

					<path d="M495 277h169v115H495z" fill="#bbb" /><path d="M498 287h166v85H498z" /><path d="M498 375h166v14H498z" fill="#9bdadb" />
					{@render bar(495, 271, 169, 'Popview - 1', false)}
					<g class="red">
						<path d="M543.500 305v66M652.500 305v31M543 320.500h121M543 328.500h36M579.500 323v17M560 315l-17 5 17 5M635 315l17 5-17 5M553 325l-10 3 10 3M570 325l9 3-9 3" />
						<circle cx="580" cy="357" r="14" fill="#f00" /><circle cx="652" cy="357" r="3" fill="#f00" />
					</g>
					<text class="dim" font-size="10" x="574" y="308">15.00MM</text><text class="dim" font-size="10" x="543" y="342">5.00MM</text>
					<text class="ui" x="599" y="385">Close</text>

					<path d="M506 391h158v161H506z" fill="#bbb" /><path d="M510 408h154v124H510z" /><path d="M510 535h154v15H510z" fill="#9bdadb" />
					{@render bar(507, 392, 157, 'Popview - 8', false)}
					<g class="red">
						<path d="M572.500 432v58M627.500 434v28M599.500 440v33M572 437.500h55M600 444.500h27M510 462.500h117v55H510M557 490.500h33M582 463v26M655 462v56M649 462.500h12M649 517.500h12M604 518q13 3 19 14" />
						<path d="m579 470 3-7 3 7M579 482l3 7 3-7M578 434l-6 3 6 3M621 434l6 3-6 3M652 470l3-7 3 7M652 510l3 7 3-7" />
						<circle cx="599" cy="490" r="11" fill="#f00" /><circle cx="572" cy="490" r="2" fill="#f00" />
					</g>
					<text class="dim" font-size="8" x="582" y="435">10.00MM</text><text class="dim" font-size="8" x="601" y="454">5.00MM</text>
					<text class="dim" font-size="9" transform="translate(551 499) rotate(-90)">5.00MM</text>
					<text class="dim" font-size="9" transform="translate(653 517) rotate(-90)">10.00MM</text>
					<text class="ui" x="602" y="546">Close</text>
				</svg>
			</article>
			<div class="vscroll">
				<i class="split"></i>
				<button aria-label="标尺"><svg width="14" height="13" fill="#fff" stroke="#445"><path d="M1.500 1.500h8v8h-8z" /><path d="M5.500 4.500h7v7h-7z" /></svg></button>
				<div class="track"><i class="tri up"></i><div class="thumb"><i></i></div><i class="tri"></i></div>
				<button aria-label="前一页"><svg width="8" height="10"><path d="M1 4l3-3 3 3zM1 8l3-3 3 3zM1 9h6v1H1z" /></svg></button>
				<button aria-label="选择浏览对象"><svg width="10" height="10"><circle cx="5" cy="5" r="3" fill="#eee" stroke="#222" /></svg></button>
				<button aria-label="下一页"><svg width="8" height="10"><path d="M1 1h6v1H1zM1 3l3 3 3-3zM1 6l3 3 3-3z" /></svg></button>
			</div>
		</div>
		<div class="hscroll"><i class="tri west"></i><div class="thumb"><i></i></div><i class="tri east"></i></div>
		<footer class="status">
			<button>页面: 1/1</button><button>字数: 89</button><button class="plain" aria-label="校对">{@render icon('spell')}</button><button>英语(美国)</button><button>插入</button>
			<div class="views">
				{#each ['print', 'reading', 'web', 'outline', 'draft'] as v}<button class:on={v === 'print'} aria-label={v}>{@render icon(v)}</button>{/each}
			</div>
			<label for="zoom">90%</label>
			<button class="round" aria-label="缩小">−</button>
			<input id="zoom" type="range" min="10" max="210" value="90" />
			<button class="round" aria-label="放大">+</button>
			<i class="grip"></i>
		</footer>
	</section>
</div>

<style>
	:global(body) {
		margin: 0;
		font: 12px/16px 'Noto Sans', 'Noto Sans CJK SC', sans-serif;
	}
	* {
		box-sizing: border-box;
	}
	button, select, input {
		font: inherit;
		color: inherit;
		margin: 0;
		padding: 0;
		border: 0;
		background: none;
		white-space: nowrap;
	}
	select {
		appearance: none;
	}
	svg {
		flex: none;
		display: block;
	}
	table {
		border-collapse: collapse;
		table-layout: fixed;
		width: 100%;
	}
	th, td {
		padding: 0;
		text-align: left;
		white-space: nowrap;
		overflow: hidden;
	}
	.caret {
		flex: none;
		width: 0;
		border: 3px solid transparent;
		border-top-color: #5c7fb5;
		border-bottom: 0;
	}
	.desktop {
		position: relative;
		height: 100vh;
		overflow: hidden;
		background: #f0f0f0;
	}

	/* order application */
	.orders {
		display: flex;
		height: 100%;
		padding-top: 4px;
		font-family: 'Liberation Sans', 'Noto Sans CJK SC', sans-serif;
	}
	.sheet {
		flex: 0 0 838px;
		display: flex;
		flex-direction: column;
		position: relative;
		z-index: 1;
		margin-left: -2px;
		border-top: 1px solid #777;
	}
	.sheet-tabs {
		display: flex;
		gap: 2px;
		align-items: flex-end;
		height: 21px;
		border-bottom: 1px solid #555;
	}
	.sheet-tabs button {
		height: 18px;
		padding: 0 4px;
		border: 1px solid #8b8b8b;
		border-bottom: 0;
		background: #eee;
	}
	.sheet-tabs .current {
		width: 36px;
		height: 20px;
		direction: rtl;
		padding: 0 6px 0 0;
		background: #fff;
	}
	.sheet-tabs .hot {
		background: #c4e4f6;
		border-color: #3c7fb1;
	}
	.form {
		flex: 1;
		display: flex;
		flex-direction: column;
		width: 400px;
	}
	.line {
		height: 17px;
		border-bottom: 1px solid #a0a0a0;
		padding-left: 2px;
	}
	.tall {
		height: 25px;
		line-height: 24px;
	}
	.blue {
		border-color: #1c2c8c;
	}
	.link {
		color: #1c2c8c;
		font-family: 'Liberation Serif', serif;
	}
	.dim {
		color: #888;
	}
	.white {
		background: #fff;
	}
	.rows {
		flex: 1;
		padding-left: 2px;
		border-bottom: 1px solid #888;
		background: repeating-linear-gradient(#fff 0 24px, #d8d8d8 24px 25px);
	}
	.order-table {
		background: #fff;
		border-right: 1px solid #888;
	}
	.order-table th {
		height: 20px;
		font-weight: normal;
	}
	.order-table td {
		height: 16px;
		line-height: 15px;
		padding: 0 0 0 5px;
		border-right: 1px solid #e4e4e4;
		border-bottom: 1px solid #eee;
	}
	.order-table td:first-child {
		padding-left: 1px;
	}
	.order-table td:last-child {
		border-right: 1px solid #888;
	}
	.order-table td.num {
		font-family: 'Liberation Mono', monospace;
		font-size: 10px;
	}
	.order-scroll {
		height: 6px;
		padding-left: 7px;
		background: #eee;
	}
	.order-scroll div {
		display: grid;
		place-items: center;
		width: 730px;
		height: 6px;
		border: 1px solid #999;
		border-bottom: 0;
		background: #f4f4f4;
	}
	.order-scroll i {
		width: 7px;
		height: 2px;
		background: repeating-linear-gradient(90deg, #333 0 2px, transparent 2px 3px);
	}
	.audit {
		flex: 1;
		margin-left: -100px;
		padding-right: 4px;
		border-top: 1px solid #777;
	}
	.rule {
		height: 21px;
		border-bottom: 1px solid #999;
	}
	.audit-page {
		height: 110%;
		margin-top: 11px;
		border: 1px solid #d0d0d0;
		border-left: 0;
		padding: 8px 3px 0 54px;
	}
	fieldset {
		height: 100%;
		margin: 0;
		padding: 2px 2px 0 1px;
		border: 1px solid #d0d0d0;
	}
	legend {
		padding: 0 2px;
		margin-left: 2px;
	}
	fieldset table {
		background: #fff;
		border: 1px solid #777;
	}
	fieldset th {
		height: 26px;
		padding-left: 7px;
		font-weight: normal;
		border-right: 1px solid #e0e0e0;
	}
	fieldset th:first-child {
		width: 100px;
	}
	fieldset th:nth-child(2), fieldset th:nth-child(3), fieldset th:nth-child(4) {
		width: 60px;
	}
	fieldset th:nth-child(5) {
		width: 120px;
	}

	/* Total Commander */
	.tc {
		position: absolute;
		z-index: 2;
		left: 705px;
		top: 83px;
		padding: 0 7px 5px;
		border: 1px solid #4a4f55;
		background: #d9e6f2;
		color: #000;
		font: bold 13px/16px 'Liberation Sans', 'Noto Sans CJK SC', sans-serif;
		box-shadow: 0 1px 8px rgba(0, 0, 0, 0.45);
	}
	.tc-title {
		display: flex;
		align-items: center;
		gap: 4px;
		height: 29px;
		margin: 0 -7px;
		padding: 0 7px;
		background: linear-gradient(90deg, #eef6fb, #fff 20%, #fff 60%, #e6f9fb);
		border-bottom: 1px solid #777;
		font: 12px/16px 'Noto Sans', 'Noto Sans CJK SC', sans-serif;
	}
	.tc-menu {
		display: flex;
		gap: 16px;
		height: 21px;
		padding-left: 4px;
		background: linear-gradient(#fafbfe, #e8ebf6 50%, #d6daec 60%, #dfe3f1);
		border-bottom: 1px solid #aaa;
		color: #828282;
		font: 12px/16px 'Noto Sans', 'Noto Sans CJK SC', sans-serif;
	}
	.tc-tools, .tc-drives {
		background: #d5d9ec;
	}
	.tc-tools {
		display: flex;
		align-items: center;
		height: 32px;
		border-top: 1px solid #fff;
		border-bottom: 1px solid #a5a8b8;
	}
	.tc-tools button {
		display: grid;
		place-items: center;
		width: 29px;
		height: 28px;
	}
	.sep {
		width: 1px;
		height: 24px;
		margin: 0 4px;
		background: #888;
	}
	.tc .down {
		border: 1px solid #6b6d78;
		border-radius: 3px;
		background: #c9ccdc;
	}
	.tc-halves {
		display: grid;
		grid-template-columns: 1fr 1fr;
		gap: 4px;
	}
	.tc-drives {
		border-bottom: 1px solid #999;
	}
	.tc-drives > div {
		display: flex;
		align-items: center;
		gap: 2px;
		height: 27px;
	}
	.tc-drives button {
		display: flex;
		align-items: center;
		justify-content: center;
		gap: 3px;
		width: 36px;
		height: 19px;
	}
	.tc-drives .ico {
		width: 15px;
		height: 15px;
	}
	.panel {
		width: 390px;
		background: #f0f0f0;
	}
	.info {
		display: flex;
		align-items: center;
		height: 27px;
	}
	.drive-pick {
		display: flex;
		align-items: center;
		width: 48px;
		height: 21px;
		padding: 0 4px;
		border: 1px solid #777;
		border-radius: 2px;
		background: linear-gradient(#f4f4f4, #ddd);
	}
	.drive-pick select {
		flex: 1;
		min-width: 0;
	}
	.tc .caret {
		border-width: 4px;
		border-bottom: 0;
		border-top-color: #000;
	}
	.free {
		flex: 1;
		padding-left: 3px;
		white-space: pre;
	}
	.info button, .path button {
		display: grid;
		place-items: center;
		width: 20px;
	}
	.info .root {
		border-left: 1px solid #999;
	}
	.path {
		display: flex;
		height: 16px;
	}
	.path span {
		flex: 1;
		padding-left: 1px;
		background: #bfcddb;
		color: #444;
		line-height: 14px;
	}
	.path .active {
		background: #99b4d1;
		color: #000;
	}
	.list {
		min-height: 374px;
		border: 1px solid #888;
		background: #fff;
	}
	.list th {
		height: 16px;
		padding-left: 2px;
		line-height: 15px;
		background: #f0f0f0;
		border-right: 1px solid #999;
		border-bottom: 1px solid #888;
	}
	th.name {
		width: 154px;
		border-right: 0;
	}
	th.ext {
		width: 35px;
	}
	th.size {
		width: 54px;
	}
	th.date {
		width: 103px;
	}
	.list td {
		height: 16px;
		line-height: 15px;
		overflow: visible;
	}
	.list .narrow {
		font-size: 12px;
	}
	.amount {
		display: flex;
		justify-content: flex-end;
		padding-right: 1px;
	}
	.dir {
		padding-right: 14px;
		font-weight: normal;
	}
	.list td.date {
		padding-left: 2px;
	}
	.file {
		display: flex;
		gap: 2px;
	}
	.panel-status {
		height: 21px;
		line-height: 20px;
		padding-left: 1px;
		white-space: nowrap;
		border-bottom: 1px solid #bbb;
	}
	.cmd {
		display: grid;
		grid-template-columns: 1fr 2fr;
		align-items: center;
		height: 22px;
		background: #f0f0f0;
	}
	.cmd label {
		text-align: right;
		padding-right: 2px;
	}
	.cmd input {
		height: 20px;
		background: #fff;
	}
	.fkeys {
		display: flex;
		height: 24px;
		padding-right: 7px;
		background: #f0f0f0;
		align-items: center;
	}
	.fkeys button {
		flex: 1;
		height: 18px;
		line-height: 18px;
		border-right: 1px solid #999;
	}

	/* Word */
	.word {
		position: absolute;
		z-index: 3;
		left: 11px;
		top: 28px;
		padding: 0 6px 6px;
		border: 1px solid #1d2a38;
		border-radius: 7px 7px 5px 5px;
		background: linear-gradient(#c6dcf2, #a9cbea 26px, #b4d0ec 60%, #a5bedb);
		box-shadow: 0 0 0 1px rgba(60, 80, 100, 0.4), 0 3px 12px 3px rgba(0, 0, 0, 0.6);
		color: #15428b;
	}
	.title {
		display: flex;
		align-items: flex-start;
		height: 28px;
		padding-left: 38px;
		border-bottom: 1px solid #55708e;
	}
	.quick {
		display: flex;
		align-items: center;
		gap: 7px;
		height: 22px;
		margin-top: 4px;
		padding: 0 11px 0 15px;
		border: 1px solid #9fb6d2;
		border-left: 0;
		border-radius: 0 11px 11px 0;
	}
	.quick .ico {
		width: 14px;
		height: 14px;
	}
	.more {
		margin: 11px 9px 0 7px;
		padding-top: 2px;
		border-top: 1px solid #234;
	}
	.more .caret {
		display: block;
		border-top-color: #234;
	}
	h1 {
		flex: 1;
		margin: 0;
		padding-left: 50px;
		font: 12px/28px 'Noto Sans', 'Noto Sans CJK SC', sans-serif;
		color: #111;
	}
	.caption {
		display: flex;
		height: 18px;
		border: 1px solid #4b5c70;
		border-top: 0;
		border-radius: 0 0 5px 5px;
		overflow: hidden;
	}
	.caption button {
		display: grid;
		place-items: center;
		width: 28px;
		border-right: 1px solid #62758c;
		background: linear-gradient(#d6e2ee, #9fb4ca 50%, #b8ccdf);
	}
	.caption .close {
		width: 46px;
		border: 0;
		background: linear-gradient(#e3a696, #c9452c 50%, #b03820 60%, #d56a4d);
	}
	.office {
		position: absolute;
		left: 10px;
		top: 5px;
		display: grid;
		place-items: center;
		width: 37px;
		height: 37px;
		border: 1px solid #7c90a8;
		border-radius: 50%;
		background: radial-gradient(#fff 40%, #c9d4e2);
		box-shadow: inset 0 0 2px 1px #fff;
	}
	.tabs {
		display: flex;
		gap: 7px;
		height: 27px;
		padding: 2px 4px 0 49px;
		background: #bfdbff;
	}
	.tabs button {
		padding: 0 11px;
	}
	.tabs .current {
		border: 1px solid #9dbbe3;
		border-bottom: 0;
		border-radius: 4px 4px 0 0;
		background: #e3effb;
		padding: 0 10px;
	}
	.tabs .help {
		margin: 5px 0 0 auto;
		padding: 0;
		width: 14px;
		height: 14px;
		border: 1px solid #fff;
		border-radius: 50%;
		background: #2c5fc6;
		box-shadow: 0 0 0 1px #4a6fb5;
		color: #fff;
		font-weight: bold;
		font-size: 10px;
		line-height: 12px;
	}
	.ribbon {
		display: flex;
		gap: 4px;
		height: 106px;
		padding: 2px 3px 0;
		border: 1px solid #8db2e3;
		border-radius: 4px;
		background: linear-gradient(#dbe7f5, #c9daee 18px, #c7d9ee 60%, #dff2ff);
	}
	.group {
		display: flex;
		flex-direction: column;
		height: 101px;
		border: 1px solid #a5c3e6;
		border-radius: 3px;
		overflow: hidden;
	}
	.edit {
		background: linear-gradient(#dbe7f5, #c9daee 30px, #d2e4f5);
	}
	.body {
		flex: 1;
		padding: 2px 3px 0;
	}
	.group footer {
		display: flex;
		justify-content: center;
		position: relative;
		height: 19px;
		background: #c1d8f0;
		color: #3e6aaa;
		line-height: 18px;
	}
	.launch {
		position: absolute;
		right: 4px;
		top: 3px;
		width: 7px;
		height: 7px;
		border: solid #6f8db4;
		border-width: 1px 0 0 1px;
		background: linear-gradient(135deg, transparent 50%, #6f8db4 50%);
	}
	.clip {
		display: flex;
		gap: 8px;
		padding: 4px 5px 0 8px;
	}
	.big {
		display: flex;
		flex-direction: column;
		align-items: center;
		gap: 4px;
		padding: 0 2px;
	}
	.big .caret {
		margin-top: 3px;
	}
	.stack {
		display: flex;
		flex-direction: column;
		gap: 7px;
	}
	.styles {
		display: flex;
		gap: 1px;
		padding-top: 4px;
	}
	.tile {
		display: grid;
		place-items: center;
		width: 30px;
		height: 30px;
		margin: 2px 0;
		border: 1px solid #a4bfe2;
		border-radius: 3px;
		background: linear-gradient(#eaf2fb 70%, #c8dbf0 70%);
	}
	.row {
		display: flex;
		gap: 3px;
		height: 21px;
		margin-bottom: 4px;
	}
	.row.first {
		height: 24px;
		align-items: center;
	}
	.combo {
		display: flex;
		align-items: center;
		width: 54px;
		height: 25px;
		padding: 0 4px 0 2px;
		border: 1px solid #abc6e8;
		background: #eaf2fb;
		color: #000;
	}
	.combo.wide {
		width: 91px;
		margin-right: -3px;
		border-right: 0;
	}
	.combo select {
		flex: 1;
		min-width: 0;
	}
	.set {
		display: flex;
		height: 21px;
		border: 1px solid #91b2dc;
		border-radius: 2px;
		background: linear-gradient(#dce8f6, #c9daef 50%, #d2e2f4);
	}
	.set button {
		display: flex;
		align-items: center;
		justify-content: center;
		gap: 2px;
		width: 21px;
		color: #222;
	}
	.set button + button {
		border-left: 1px solid #b9cfe9;
	}
	.set.roomy button {
		width: 23px;
	}
	.set .drop, .set.roomy .drop {
		width: 32px;
	}
	.set .on, .views .on {
		background: linear-gradient(#fbd8a0, #fcb94f 50%, #fddb7c);
	}
	.serif {
		font-family: 'Liberation Serif', serif;
		font-size: 15px;
	}
	.serif s {
		font-size: 12px;
		font-weight: bold;
	}
	sub, sup {
		font-size: 8px;
		line-height: 0;
		color: #2756c0;
	}
	.set .wen {
		flex-direction: column;
		gap: 0;
		color: #8795a8;
		font-size: 11px;
		line-height: 9px;
	}
	.wen small {
		font-size: 8px;
		line-height: 8px;
	}
	.boxed {
		border: 1px solid #222;
		padding: 0 1px;
		line-height: 14px;
	}
	.mark {
		line-height: 13px;
		border-bottom: 3px solid #ff0;
		padding: 0 1px;
	}
	.hl {
		font-size: 11px;
	}
	.red.mark {
		border-color: #d00;
		color: #2b4f94;
	}
	.shade {
		background: #aaa;
		padding: 0 2px;
	}
	.ring {
		border: 1px solid #555;
		border-radius: 50%;
		font-size: 10px;
		width: 16px;
		line-height: 14px;
	}
	.less {
		font-size: 12px;
	}

	.work {
		display: flex;
		height: 480px;
		padding: 6px 0 0 4px;
		background: #a6c3ee;
	}
	.page {
		padding: 0 47px 0 0;
		background: #fff;
		color: #000;
		font-family: 'Liberation Mono', 'Noto Sans CJK SC', monospace;
		overflow: hidden;
	}
	.page p {
		display: flex;
		gap: 3px;
		margin: 0;
		height: 19px;
		line-height: 19px;
		white-space: nowrap;
	}
	.page .h {
		height: 16px;
		line-height: 16px;
		gap: 11px;
		padding-left: 25px;
		font-size: 13px;
	}
	.page i {
		font-style: normal;
		color: #777;
	}
	.page .h i {
		margin-left: -11px;
	}
	.page a {
		color: #1414c0;
		font-size: 11px;
	}
	.page .l1 {
		padding-left: 49px;
	}
	.l1 span:first-child {
		width: 19px;
	}
	.l2 {
		padding-left: 71px;
	}
	.l3 {
		padding-left: 124px;
	}
	.l3 > span:first-child {
		width: 18px;
	}
	tt {
		font-family: inherit;
	}
	.wavy {
		text-decoration: underline wavy #2e8b2e 1px;
	}
	.cad {
		margin: 8px 0 0 62px;
	}
	.cad text {
		font-family: 'Liberation Mono', monospace;
	}
	.cad .red {
		stroke: #d01010;
		fill: none;
	}
	.cad .net {
		stroke: #bdbdbd;
		stroke-dasharray: 9 2;
	}
	.cad .dim {
		fill: #d01414;
	}
	.cad .ui {
		font-size: 8px;
		font-weight: bold;
	}
	.cad .pop {
		font-size: 8px;
		fill: #d0d0d0;
	}
	.vscroll {
		flex: 1;
		min-width: 17px;
		display: flex;
		flex-direction: column;
		align-items: center;
		gap: 6px;
	}
	.vscroll button {
		display: block;
	}
	.split {
		width: 9px;
		height: 2px;
		margin: -2px 0 -4px;
		background: #345;
	}
	.track {
		flex: 1;
		align-self: stretch;
		display: flex;
		flex-direction: column;
		align-items: center;
		justify-content: space-between;
		padding: 7px 1px;
		background: #7d9bc8;
	}
	.thumb {
		display: grid;
		place-items: center;
		border: 1px solid #5c7396;
		border-radius: 2px;
	}
	.track .thumb {
		width: 14px;
		height: 168px;
		margin-bottom: 148px;
		background: linear-gradient(90deg, #f0f4fa, #c2d0e4);
	}
	.track .thumb i {
		width: 8px;
		height: 8px;
		background: repeating-linear-gradient(#6c7f9c 0 1px, transparent 1px 2px);
	}
	.tri {
		width: 0;
		border: 5px solid transparent;
		border-top-color: #3b5483;
		border-bottom: 0;
	}
	.tri.up {
		border: 5px solid transparent;
		border-bottom-color: #3b5483;
		border-top: 0;
	}
	.tri.west {
		border: 5px solid transparent;
		border-right-color: #3b5483;
		border-left: 0;
	}
	.tri.east {
		border: 5px solid transparent;
		border-left-color: #3b5483;
		border-right: 0;
	}
	.hscroll {
		display: flex;
		align-items: center;
		gap: 24px;
		height: 17px;
		padding: 0 23px 0 6px;
		border-top: 1px solid #4d74ad;
		border-bottom: 1px solid #4d74ad;
		background: linear-gradient(90deg, #7d9bc8 calc(100% - 17px), #a6c3ee calc(100% - 17px));
	}
	.hscroll .thumb {
		flex: 1;
		height: 14px;
		margin-left: 16px;
		background: linear-gradient(#eef3fa, #b9c9de);
	}
	.hscroll .thumb i {
		width: 8px;
		height: 7px;
		background: repeating-linear-gradient(90deg, #6c7f9c 0 1px, transparent 1px 2px);
	}
	.status {
		display: flex;
		align-items: center;
		height: 22px;
		padding-right: 2px;
		background: linear-gradient(#d7e6fa, #b9d2f6 40%, #a9c6f0 50%, #bcd6fa);
	}
	.status > button {
		height: 20px;
		padding: 0 9px;
		border-right: 1px solid #8aabdb;
	}
	.status > .plain {
		border: 0;
	}
	.views {
		display: flex;
		margin: 0 9px 0 auto;
		border: 1px solid #8aabdb;
		border-radius: 2px;
		background: #cfdff4;
	}
	.views button {
		display: grid;
		place-items: center;
		width: 18px;
		height: 17px;
	}
	.views .ico {
		width: 14px;
		height: 14px;
	}
	.status > .round {
		width: 15px;
		height: 15px;
		padding: 0;
		margin-left: 9px;
		border: 1px solid #56657c;
		border-radius: 50%;
		background: #eef2f8;
		line-height: 12px;
		font-weight: bold;
	}
	.status > input {
		appearance: none;
		width: 96px;
		height: 14px;
		margin: 0 -5px 0 4px;
		background: linear-gradient(transparent 6px, #5f7fae 6px 7px, transparent 7px);
	}
	.status > input::-webkit-slider-thumb {
		appearance: none;
		width: 9px;
		height: 12px;
		border: 1px solid #47566e;
		border-radius: 1px 1px 5px 5px;
		background: #e8eef6;
	}
	.grip {
		align-self: flex-end;
		width: 11px;
		height: 11px;
		margin: 0 0 2px 8px;
		background: radial-gradient(circle, #5f82b8 1px, transparent 1px) 0 0 / 4px 4px;
		clip-path: polygon(100% 0, 100% 100%, 0 100%);
	}
</style>
